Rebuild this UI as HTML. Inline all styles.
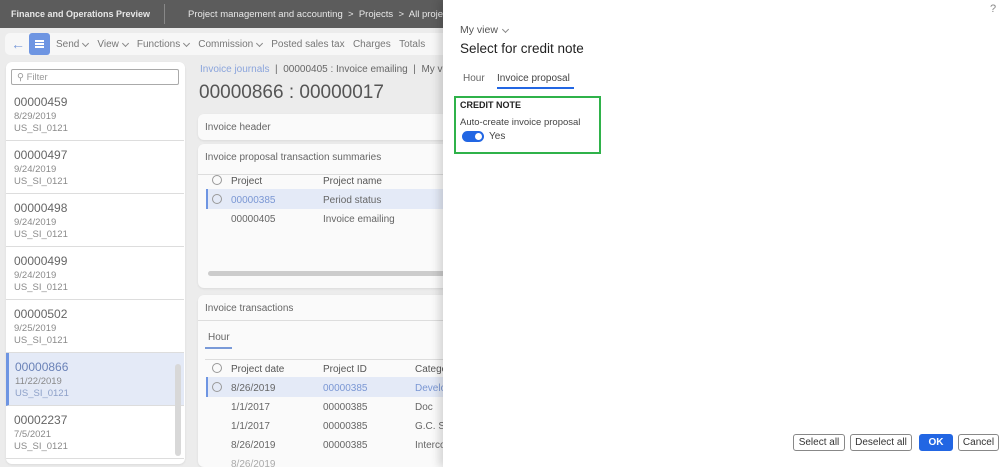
<!DOCTYPE html>
<html><head><style>
*{margin:0;padding:0;box-sizing:border-box}
body{width:1000px;height:467px;overflow:hidden;background:#ececec;font-family:"Liberation Sans",sans-serif;position:relative;color:#666;font-size:10px}
.abs{position:absolute;white-space:nowrap}
.top{left:0;top:0;width:443px;height:28px;background:#5c5c5c;color:#e8e8e8}
.card{background:#fafafa;border-radius:6px;box-shadow:0 1px 2px rgba(0,0,0,.08)}
.item{position:absolute;left:0;width:178px;height:53px;border-bottom:1px solid #ddd;padding:7px 0 0 8px}
.item b{font-weight:normal;font-size:12px;color:#666;display:block;margin-bottom:2px}
.item span{display:block;font-size:9.5px;color:#8a8a8a;line-height:12px}
.rad{position:absolute;width:10px;height:10px;border:1px solid #999;border-radius:50%}
.btn{position:absolute;top:434px;height:17px;border:1px solid #888;border-radius:3px;background:#fff;color:#333;font-size:10px;text-align:center;line-height:15px}
.ch{display:inline-block;width:5px;height:5px;border-right:1px solid #888;border-bottom:1px solid #888;transform:rotate(45deg);margin:0 9px 2px 4px;vertical-align:middle}
</style></head><body>
<div class="abs top">
 <div class="abs" style="left:11px;top:9px;font-weight:bold;font-size:9px">Finance and Operations Preview</div>
 <div class="abs" style="left:164px;top:4px;width:1px;height:20px;background:#888"></div>
 <div class="abs" style="left:188px;top:9px;font-size:9.5px">Project management and accounting &nbsp;&gt;&nbsp; Projects &nbsp;&gt;&nbsp; All proje</div>
</div>
<div class="abs" style="left:5px;top:33px;width:438px;height:22px;background:#f7f7f7;border-radius:5px 0 0 5px"></div>
<div class="abs" style="left:11px;top:36px;color:#7a9ad8;font-size:14px">←</div>
<div class="abs" style="left:29px;top:33px;width:21px;height:22px;background:#6e95e2;border-radius:3px"></div>
<div class="abs" style="left:35px;top:40px;width:9px;height:1.5px;background:#fff;box-shadow:0 3px 0 #fff,0 6px 0 #fff"></div>
<div class="abs" style="left:56px;top:39px;font-size:10px;color:#777">Send<span class="ch"></span>View<span class="ch"></span>Functions<span class="ch"></span>Commission<span class="ch"></span>Posted sales tax &nbsp;&nbsp;Charges &nbsp;&nbsp;Totals</div>
<div class="abs card" style="left:6px;top:62px;width:179px;height:402px;background:#fff;overflow:hidden">
 <div class="abs" style="left:5px;top:7px;width:168px;height:16px;border:1px solid #aaa;border-radius:2px;color:#999;font-size:9.5px;padding:2px 0 0 5px">⚲ Filter</div>
 <div class="item" style="top:26px"><b>00000459</b><span>8/29/2019</span><span>US_SI_0121</span></div>
 <div class="item" style="top:79px"><b>00000497</b><span>9/24/2019</span><span>US_SI_0121</span></div>
 <div class="item" style="top:132px"><b>00000498</b><span>9/24/2019</span><span>US_SI_0121</span></div>
 <div class="item" style="top:185px"><b>00000499</b><span>9/24/2019</span><span>US_SI_0121</span></div>
 <div class="item" style="top:238px"><b>00000502</b><span>9/25/2019</span><span>US_SI_0121</span></div>
 <div class="item" style="top:291px;background:#e4eaf7;border-left:3px solid #6e95e2;padding-left:6px"><b style="color:#6a82b8">00000866</b><span>11/22/2019</span><span style="color:#8da0c8">US_SI_0121</span></div>
 <div class="item" style="top:344px"><b>00002237</b><span>7/5/2021</span><span>US_SI_0121</span></div>
 <div class="abs" style="left:169px;top:302px;width:6px;height:92px;background:#d8d8d8;border-radius:3px"></div>
</div>
<div class="abs" style="left:200px;top:64px;font-size:10px"><span style="color:#8aa4dc">Invoice journals</span> &nbsp;| &nbsp;00000405 : Invoice emailing &nbsp;| &nbsp;My vie</div>
<div class="abs" style="left:199px;top:82px;font-size:19px;color:#555">00000866 : 00000017</div>
<div class="abs card" style="left:198px;top:114px;width:250px;height:26px"><div class="abs" style="left:7px;top:8px">Invoice header</div></div>
<div class="abs card" style="left:198px;top:144px;width:250px;height:144px">
 <div class="abs" style="left:7px;top:8px">Invoice proposal transaction summaries</div>
 <div class="abs" style="left:0;top:30px;width:250px;height:1px;background:#ddd"></div>
 <div class="rad" style="left:14px;top:31px"></div>
 <div class="abs" style="left:33px;top:32px;color:#555">Project</div><div class="abs" style="left:125px;top:32px;color:#555">Project name</div>
 <div class="abs" style="left:8px;top:45px;width:242px;height:20px;background:#e4eaf7;border-left:2px solid #6e95e2"></div>
 <div class="rad" style="left:14px;top:50px"></div>
 <div class="abs" style="left:33px;top:51px;color:#7a97d4">00000385</div><div class="abs" style="left:125px;top:51px">Period status</div>
 <div class="abs" style="left:33px;top:70px">00000405</div><div class="abs" style="left:125px;top:70px">Invoice emailing</div>
 <div class="abs" style="left:10px;top:127px;width:240px;height:5px;background:#ccc;border-radius:3px"></div>
</div>
<div class="abs card" style="left:198px;top:295px;width:250px;height:172px;overflow:hidden">
 <div class="abs" style="left:7px;top:8px">Invoice transactions</div>
 <div class="abs" style="left:0;top:25px;width:250px;height:1px;background:#ddd"></div>
 <div class="abs" style="left:10px;top:37px">Hour</div>
 <div class="abs" style="left:7px;top:52px;width:27px;height:2px;background:#7a9ad8"></div>
 <div class="abs" style="left:7px;top:64px;width:243px;height:1px;background:#ddd"></div>
 <div class="rad" style="left:14px;top:68px"></div>
 <div class="abs" style="left:33px;top:69px;color:#555">Project date</div><div class="abs" style="left:125px;top:69px;color:#555">Project ID</div><div class="abs" style="left:217px;top:69px;color:#555">Catego</div>
 <div class="abs" style="left:8px;top:82px;width:242px;height:20px;background:#e4eaf7;border-left:2px solid #6e95e2"></div>
 <div class="rad" style="left:14px;top:87px"></div>
 <div class="abs" style="left:33px;top:88px">8/26/2019</div><div class="abs" style="left:125px;top:88px;color:#7a97d4">00000385</div><div class="abs" style="left:217px;top:88px;color:#7a97d4">Develo</div>
 <div class="abs" style="left:33px;top:107px">1/1/2017</div><div class="abs" style="left:125px;top:107px">00000385</div><div class="abs" style="left:217px;top:107px">Doc</div>
 <div class="abs" style="left:33px;top:126px">1/1/2017</div><div class="abs" style="left:125px;top:126px">00000385</div><div class="abs" style="left:217px;top:126px">G.C. Su</div>
 <div class="abs" style="left:33px;top:145px">8/26/2019</div><div class="abs" style="left:125px;top:145px">00000385</div><div class="abs" style="left:217px;top:145px">Interco</div>
 <div class="abs" style="left:33px;top:164px;color:#aaa">8/26/2019</div>
</div>
<!-- panel -->
<div class="abs" style="left:443px;top:0;width:557px;height:467px;background:#fff;box-shadow:-4px 0 8px rgba(0,0,0,.15);color:#333">
 <div class="abs" style="left:547px;top:3px;font-size:11px;color:#888">?</div>
 <div class="abs" style="left:17px;top:24px;font-size:10.5px;color:#555">My view<span class="ch" style="margin-left:5px"></span></div>
 <div class="abs" style="left:17px;top:41px;font-size:13.5px;color:#222">Select for credit note</div>
 <div class="abs" style="left:20px;top:73px;font-size:10px;color:#666">Hour</div>
 <div class="abs" style="left:54px;top:73px;font-size:10px;color:#444">Invoice proposal</div>
 <div class="abs" style="left:54px;top:87px;width:77px;height:2px;background:#2266e3"></div>
 <div class="abs" style="left:11px;top:96px;width:147px;height:58px;border:2px solid #2fb24a"></div>
 <div class="abs" style="left:17px;top:100px;font-size:9px;font-weight:bold;color:#222">CREDIT NOTE</div>
 <div class="abs" style="left:17px;top:117px;font-size:9.5px;color:#444">Auto-create invoice proposal</div>
 <div class="abs" style="left:19px;top:131px;width:22px;height:11px;background:#2266e3;border-radius:6px"><div class="abs" style="left:13px;top:2px;width:7px;height:7px;background:#fff;border-radius:50%"></div></div>
 <div class="abs" style="left:46px;top:131px;font-size:10px;color:#444">Yes</div>
</div>
<div class="btn" style="left:793px;width:52px">Select all</div>
<div class="btn" style="left:850px;width:62px">Deselect all</div>
<div class="btn" style="left:919px;width:34px;background:#2266e3;border-color:#2266e3;color:#fff;font-weight:bold">OK</div>
<div class="btn" style="left:958px;width:41px">Cancel</div>
</body></html>
